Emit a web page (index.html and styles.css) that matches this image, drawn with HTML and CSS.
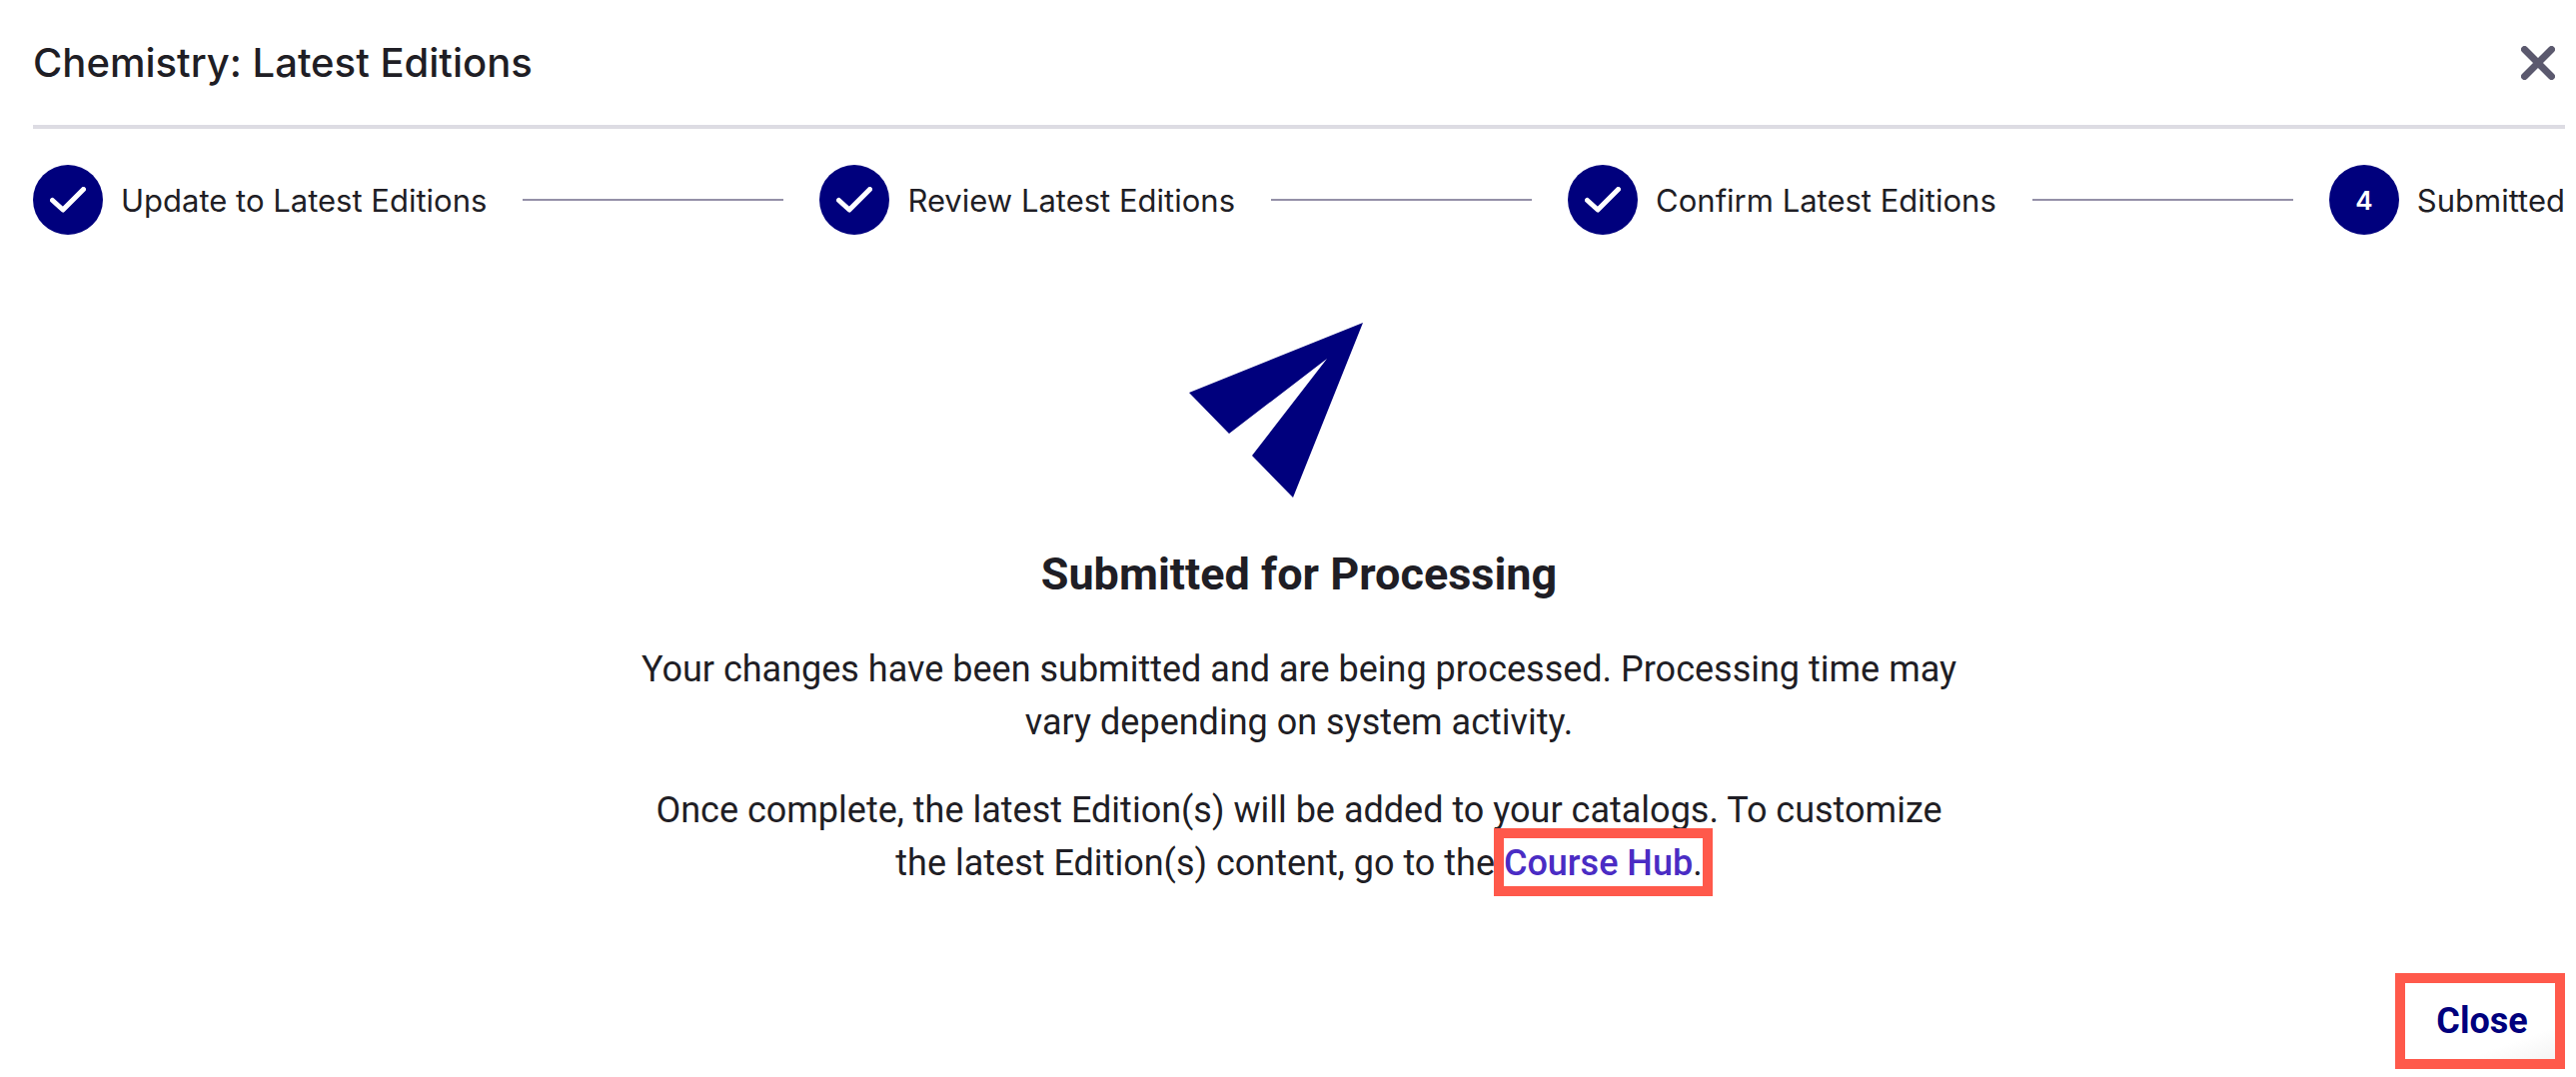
FILE: index.html
```
<!DOCTYPE html>
<html lang="en">
<head>
  <meta charset="UTF-8">
  <meta name="viewport" content="width=device-width, initial-scale=1.0">
  <title>Chemistry: Latest Editions</title>
  <link rel="stylesheet" href="styles.css">
</head>
<body>
<div class="dialog" role="dialog" aria-labelledby="dialog-title">
  <header class="dialog-header">
    <h1 id="dialog-title">Chemistry: Latest Editions</h1>
    <button type="button" class="icon-button" aria-label="Close dialog">
      <svg width="34" height="34" viewBox="0 0 34 34" aria-hidden="true">
        <path d="M3.5 3.5L30.5 30.5M30.5 3.5L3.5 30.5" fill="none" stroke="#5b596e" stroke-width="7" stroke-linecap="round"/>
      </svg>
    </button>
  </header>

  <ol class="stepper">
    <li class="step">
      <span class="step-icon">
        <svg width="36" height="26" viewBox="0 0 36 26" aria-hidden="true">
          <path d="M2.5 13.5L13 23L33.5 2.5" fill="none" stroke="#fff" stroke-width="5" stroke-linecap="round" stroke-linejoin="round"/>
        </svg>
      </span>
      <span class="step-label">Update to Latest Editions</span>
    </li>
    <li class="connector" aria-hidden="true"></li>
    <li class="step">
      <span class="step-icon">
        <svg width="36" height="26" viewBox="0 0 36 26" aria-hidden="true">
          <path d="M2.5 13.5L13 23L33.5 2.5" fill="none" stroke="#fff" stroke-width="5" stroke-linecap="round" stroke-linejoin="round"/>
        </svg>
      </span>
      <span class="step-label">Review Latest Editions</span>
    </li>
    <li class="connector" aria-hidden="true"></li>
    <li class="step">
      <span class="step-icon">
        <svg width="36" height="26" viewBox="0 0 36 26" aria-hidden="true">
          <path d="M2.5 13.5L13 23L33.5 2.5" fill="none" stroke="#fff" stroke-width="5" stroke-linecap="round" stroke-linejoin="round"/>
        </svg>
      </span>
      <span class="step-label">Confirm Latest Editions</span>
    </li>
    <li class="connector" aria-hidden="true"></li>
    <li class="step" aria-current="step">
      <span class="step-icon">4</span>
      <span class="step-label">Submitted</span>
    </li>
  </ol>

  <main class="message">
    <svg class="plane" width="220" height="176" viewBox="0 0 220 176" aria-hidden="true">
      <path d="M174 0L0 70L40 111L138 36L63 133L104 175Z" fill="#00007d"/>
    </svg>
    <h2>Submitted for Processing</h2>
    <p>Your changes have been submitted and are being processed. Processing time may<br>vary depending on system activity.</p>
    <p>Once complete, the latest Edition(s) will be added to your catalogs. To customize<br>the latest Edition(s) content, go to the <span class="highlight"><a href="#">Course Hub</a>.</span></p>
  </main>

  <footer class="dialog-footer">
    <button type="button" class="close-button">Close</button>
  </footer>
</div>
</body>
</html>
```

FILE: styles.css
```
* {
  box-sizing: border-box;
}

body {
  margin: 0;
  background: #fff;
  color: #1f1e25;
  font-family: Roboto, sans-serif;
}

.dialog {
  padding: 0 11px 8px 33px;
}

.dialog-header {
  display: flex;
  align-items: center;
  justify-content: space-between;
  height: 129px;
  padding-right: 10px;
  border-bottom: 4px solid #dddce3;
}

.dialog-header h1 {
  margin: 0;
  font-family: Inter, sans-serif;
  font-size: 40px;
  font-weight: 500;
}

.icon-button {
  display: flex;
  padding: 0;
  border: none;
  background: none;
  cursor: pointer;
}

.stepper {
  display: flex;
  align-items: center;
  gap: 36px;
  margin: 36px 0 88px;
  padding: 0;
  list-style: none;
  font-family: Inter, sans-serif;
}

.step {
  display: flex;
  align-items: center;
  gap: 18px;
}

.step-icon {
  display: flex;
  align-items: center;
  justify-content: center;
  width: 70px;
  height: 70px;
  border-radius: 50%;
  background: #00007d;
  color: #fff;
  font-size: 26px;
  font-weight: 600;
}

.step-label {
  font-size: 31px;
  white-space: nowrap;
}

.connector {
  flex: 1;
  height: 2px;
  background: #9490a8;
}

.message {
  display: flex;
  flex-direction: column;
  align-items: center;
  text-align: center;
}

.message h2 {
  margin: 48px 0 42px;
  font-size: 45px;
  line-height: 55px;
  font-weight: 700;
}

.message p {
  margin: 0 0 35px;
  font-size: 36px;
  line-height: 53px;
}

.message a {
  color: #4a2cc4;
  font-weight: 500;
  text-decoration: none;
}

.highlight {
  position: relative;
}

/* frame lies over the text around the link */
.highlight::after {
  content: "";
  position: absolute;
  inset: -14px -10px -12px;
  border: 10px solid #ff594b;
  pointer-events: none;
}

.dialog-footer {
  display: flex;
  justify-content: flex-end;
  margin-top: 48px;
}

.close-button {
  width: 170px;
  height: 96px;
  padding: 0 0 0 4px;
  border: 10px solid #ff594b;
  background: linear-gradient(160deg, #fff 75%, #f4f4f4);
  color: #00007d;
  font-family: inherit;
  font-size: 36px;
  font-weight: 700;
  cursor: pointer;
}
```
